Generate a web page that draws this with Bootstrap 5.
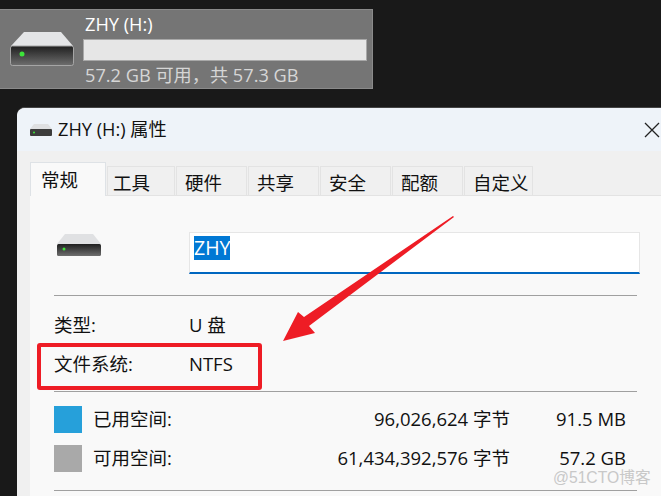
<!DOCTYPE html>
<html lang="zh-CN">
<head>
  <meta charset="UTF-8" />
  <meta name="viewport" content="width=device-width, initial-scale=1.0"/>
  <title>ZHY (H:) 属性</title>
  <link href="https://cdn.jsdelivr.net/npm/bootstrap@5.3.0/dist/css/bootstrap.min.css" rel="stylesheet"/>
  <style>
    html, body { height: 100%; overflow: hidden; }
    body { background: #191919; font-family: "Open Sans", "Noto Sans CJK SC", sans-serif; font-size: 18.5px; color: #111; padding-top: 9px; position: relative; }
    .drive-tile { width: 373px; height: 80px; background: #757575; border: 1px solid #8a8a8a; border-left: 0; color: #fff; padding-left: 10px; }
    .drive-tile .tile-icon { width: 64px; margin-right: 9px; }
    .tile-body { width: 284px; line-height: 1; }
    .tile-name { font-size: 18.2px; margin: 1px 0 6px 2px; height: 18px; }
    .tile-bar { height: 22px; border-radius: 0; background: #e6e6e6; border: 1px solid #a8a8a8; }
    .tile-sub { font-size: 18.2px; color: #d6d6d6; margin: 5px 0 0 2px; }
    .prop-window { margin: 18px 0 0 17px; width: 644px; height: 400px; background: #f0f0f0; border-radius: 8px 0 0 0; border-top: 1px solid #444; }
    .prop-title { height: 43px; background: #eef3f9; border-radius: 8px 0 0 0; padding-left: 13px; font-size: 18.2px; }
    .prop-title svg { margin-right: 6px; }
    .prop-close { margin-left: auto; margin-right: 1px !important; margin-top: 1px; }
    .prop-tabs { margin: 12px 0 0 13px; border-bottom: 1px solid #e3e3e3; height: 33px; flex-wrap: nowrap; align-items: flex-end; }
    .prop-tabs .nav-link { width: 71px; height: 29px; padding: 0 0 0 8px; margin: 0 1px 0 0; border: 1px solid #e3e3e3; border-bottom: 0; border-radius: 0; background: #f0f0f0; color: #111; font-size: 18.5px; line-height: 31px; white-space: nowrap; }
    .prop-tabs .nav-link.active { width: 76px; height: 34px; margin-bottom: -1px; background: #f9f9f9; line-height: 33px; padding-left: 10px; color: #111; }
    .prop-tabs .nav-item:nth-child(2) .nav-link { width: 68px; padding-left: 5px; }
    .prop-tabs .nav-item:nth-child(7) .nav-link { width: 69px; }
    .prop-pane { margin-left: 13px; height: 320px; background: #f9f9f9; padding: 0 24px; }
    .name-row { padding-top: 36px; height: 99px; }
    .name-row .pane-icon { flex: none; width: 135px; padding: 2px 0 0 3px; }
    .name-input { flex: none; width: 451px; height: 42px; padding: 3px 4px 0; border: 1px solid #e6e6e6; border-bottom: 2px solid #0067c0; border-radius: 0; background: #fff; font-size: 19.5px; line-height: 24px; }
    .name-input mark { background: #0078d4; color: #fff; padding: 0; display: inline-block; height: 24px; line-height: 24px; }
    .pane-line { margin: 0; border: 0; border-top: 1px solid #a0a0a0; opacity: 1; width: 583px; }
    .info-rows { height: 95px; padding-top: 15px; }
    .info-row { height: 39px; line-height: 27px; }
    .info-label { width: 135px; }
    .space-rows { height: 98px; padding-top: 14px; }
    .space-row { height: 39px; line-height: 26px; }
    .swatch { width: 28px; height: 27px; margin-right: 11px; }
    .swatch-used { background: #26a0da; }
    .swatch-free { background: #a9a9a9; }
    .space-label { width: 180px; }
    .space-bytes { width: 237px; text-align: right; white-space: nowrap; }
    .space-size { width: 116px; text-align: right; }
    .red-box { position: absolute; left: 37px; top: 343px; width: 225px; height: 47px; border: 4px solid #ee1c25; border-radius: 3px; }
    .red-arrow { position: absolute; left: 0; top: 0; }
    .watermark { position: absolute; left: 553px; top: 469px; font-family: "Liberation Sans", "Noto Sans CJK SC", sans-serif; font-size: 15.7px; color: #c8c8c8; line-height: 1.2; }
  </style>
</head>
<body>
  <div class="drive-tile d-flex align-items-center">
    <svg class="tile-icon" viewBox="0 0 64 34" width="64" height="34">
      <defs>
        <linearGradient id="driveFront" x1="0" y1="0" x2="0" y2="1"><stop offset="0" stop-color="#1f1f1f"/><stop offset="1" stop-color="#6e6e6e"/></linearGradient>
      </defs>
      <path d="M14 0H51L63 14H1Z" fill="#e4e5e7"/>
      <rect x="0.5" y="14" width="63" height="19.5" rx="2" fill="url(#driveFront)" stroke="#a5a5a5"/>
      <circle cx="12" cy="22" r="2.5" fill="#3de43a"/>
    </svg>
    <div class="tile-body">
      <div class="tile-name">ZHY (H:)</div>
      <div class="progress tile-bar"></div>
      <div class="tile-sub">57.2 GB 可用，共 57.3 GB</div>
    </div>
  </div>

  <div class="prop-window">
    <div class="prop-title d-flex align-items-center">
      <svg viewBox="0 0 22 12" width="22" height="12">
        <path d="M4 0H18L22 5H0Z" fill="#dfe0e2"/>
        <rect y="5" width="22" height="7" rx="1" fill="#3c3c3c"/>
        <circle cx="4" cy="8.500" r="1" fill="#3de43a"/>
      </svg>
      <span>ZHY (H:) 属性</span>
      <svg class="prop-close" viewBox="0 0 16 16" width="16" height="16">
        <path d="M1 1L15 15M15 1L1 15" stroke="#222" stroke-width="1.300" fill="none"/>
      </svg>
    </div>
    <ul class="nav nav-tabs prop-tabs">
      <li class="nav-item"><a class="nav-link active" href="#">常规</a></li>
      <li class="nav-item"><a class="nav-link" href="#">工具</a></li>
      <li class="nav-item"><a class="nav-link" href="#">硬件</a></li>
      <li class="nav-item"><a class="nav-link" href="#">共享</a></li>
      <li class="nav-item"><a class="nav-link" href="#">安全</a></li>
      <li class="nav-item"><a class="nav-link" href="#">配额</a></li>
      <li class="nav-item"><a class="nav-link" href="#">自定义</a></li>
    </ul>
    <div class="prop-pane">
      <div class="name-row d-flex">
        <div class="pane-icon">
          <svg class="d-block" viewBox="0 0 44 22" width="44" height="22">
            <path d="M8 0H36L44 10H0Z" fill="#e0e1e3"/>
            <rect y="10" width="44" height="12" rx="1.500" fill="url(#driveFront)"/>
            <circle cx="7" cy="15" r="1.500" fill="#3de43a"/>
          </svg>
        </div>
        <div class="name-input"><mark>ZHY</mark></div>
      </div>
      <hr class="pane-line">
      <div class="info-rows">
        <div class="info-row d-flex"><div class="info-label">类型:</div><div>U 盘</div></div>
        <div class="info-row d-flex"><div class="info-label">文件系统:</div><div>NTFS</div></div>
      </div>
      <hr class="pane-line">
      <div class="space-rows">
        <div class="space-row d-flex align-items-start">
          <div class="swatch swatch-used"></div>
          <div class="space-label">已用空间:</div>
          <div class="space-bytes">96,026,624 字节</div>
          <div class="space-size">91.5 MB</div>
        </div>
        <div class="space-row d-flex align-items-start">
          <div class="swatch swatch-free"></div>
          <div class="space-label">可用空间:</div>
          <div class="space-bytes">61,434,392,576 字节</div>
          <div class="space-size">57.2 GB</div>
        </div>
      </div>
      <hr class="pane-line">
    </div>
  </div>

  <div class="red-box"></div>
  <svg class="red-arrow" width="661" height="496" viewBox="0 0 661 496">
    <polygon points="453,216 304,317 298,312 283,341 315,333 309,326 454,217" fill="#ee1c25"/>
  </svg>
  <div class="watermark">@51CTO博客</div>
</body>
</html>
